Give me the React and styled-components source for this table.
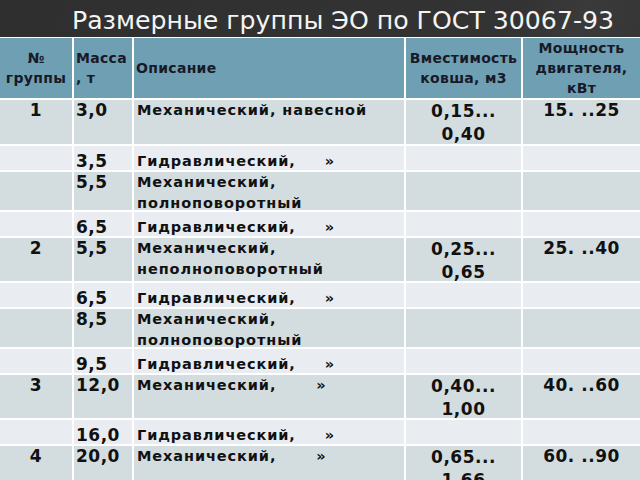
import React from "react";
import styled, { createGlobalStyle } from "styled-components";

const Global = createGlobalStyle`
  html, body { margin: 0; padding: 0; background: #333333; overflow: hidden; }
  #root { width: 640px; height: 480px; overflow: hidden; }
`;

const Slide = styled.div`
  width: 640px;
  height: 480px;
  display: flex;
  flex-direction: column;
  background: #ffffff;
  overflow: hidden;
  font-family: "DejaVu Sans", Verdana, sans-serif;
`;

const TitleBar = styled.div`
  height: 37px;
  flex: none;
  background: linear-gradient(110deg, #2f2f2f 0%, #333333 80%, #3a3a3a 90%, #363636 100%);
  display: flex;
  align-items: center;
  padding: 3px 0 0 72px;
  box-sizing: border-box;
`;

const Title = styled.h1`
  margin: 0;
  font-weight: normal;
  font-size: 25.2px;
  letter-spacing: 0;
  color: #f4f4f4;
  white-space: nowrap;
`;

const Table = styled.div`
  display: grid;
  grid-template-columns: 72px 58px 270px 115px 117px;
  column-gap: 2px;
  row-gap: 2px;
  background: #ffffff;
  padding-top: 1px;
`;

const HeadCell = styled.div`
  background: #6f9fb3;
  height: 60px;
  display: flex;
  flex-direction: column;
  justify-content: center;
  align-items: ${(p) => (p.$center ? "center" : "flex-start")};
  text-align: ${(p) => (p.$center ? "center" : "left")};
  padding-left: ${(p) => (p.$center ? 0 : 2)}px;
  font-weight: bold;
  font-size: 14px;
  line-height: 20px;
  color: #181a28;
  letter-spacing: 0.3px;
  white-space: nowrap;
`;

const Cell = styled.div`
  background: ${(p) => (p.$dark ? "#d3dde0" : "#e9edf1")};
  height: ${(p) => p.$h}px;
  box-sizing: border-box;
  padding-top: ${(p) => (p.$dark ? 0 : 5)}px;
  padding-left: ${(p) => p.$pl || 0}px;
  text-align: ${(p) => (p.$center ? "center" : "left")};
  color: #111111;
  font-weight: bold;
  white-space: nowrap;
`;

const Num = styled.div`
  font-size: 17px;
  line-height: ${(p) => (p.$tall ? 23 : 21)}px;
  letter-spacing: 0.5px;
`;

const Desc = styled.div`
  font-size: 14.5px;
  line-height: 21px;
  letter-spacing: 0.9px;
`;

const Quote = styled.span`
  display: inline-block;
  margin-left: ${(p) => p.$gap}px;
`;

const rows = [
  { dark: true, h: 44, g: "1", m: "3,0", d: ["Механический, навесной"], v: ["0,15...", "0,40"], p: "15. ..25" },
  { h: 24, m: "3,5", d: ["Гидравлический,"], q: 29 },
  { dark: true, h: 38, m: "5,5", d: ["Механический,", "полноповоротный"] },
  { h: 24, m: "6,5", d: ["Гидравлический,"], q: 29 },
  { dark: true, h: 43, g: "2", m: "5,5", d: ["Механический,", "неполноповоротный"], v: ["0,25...", "0,65"], p: "25. ..40" },
  { h: 24, m: "6,5", d: ["Гидравлический,"], q: 29 },
  { dark: true, h: 38, m: "8,5", d: ["Механический,", "полноповоротный"] },
  { h: 24, m: "9,5", d: ["Гидравлический,"], q: 29 },
  { dark: true, h: 43, g: "3", m: "12,0", d: ["Механический,"], q: 40, v: ["0,40...", "1,00"], p: "40. ..60" },
  { h: 24, m: "16,0", d: ["Гидравлический,"], q: 29 },
  { dark: true, h: 46, g: "4", m: "20,0", d: ["Механический,"], q: 40, v: ["0,65...", "1,66"], p: "60. ..90" },
];

export default function App() {
  return (
    <>
      <Global />
      <Slide>
        <TitleBar>
          <Title>Размерные группы ЭО по ГОСТ 30067-93</Title>
        </TitleBar>
        <Table>
          <HeadCell $center>
            <span>№</span>
            <span>группы</span>
          </HeadCell>
          <HeadCell>
            <span>Масса</span>
            <span>, т</span>
          </HeadCell>
          <HeadCell>
            <span>Описание</span>
          </HeadCell>
          <HeadCell $center>
            <span>Вместимость</span>
            <span>ковша, м3</span>
          </HeadCell>
          <HeadCell $center>
            <span>Мощность</span>
            <span>двигателя,</span>
            <span>кВт</span>
          </HeadCell>
          {rows.map((r, i) => (
            <React.Fragment key={i}>
              <Cell $dark={r.dark} $h={r.h} $center>
                {r.g && <Num>{r.g}</Num>}
              </Cell>
              <Cell $dark={r.dark} $h={r.h} $pl={2}>
                <Num>{r.m}</Num>
              </Cell>
              <Cell $dark={r.dark} $h={r.h} $pl={3}>
                {r.d.map((line, j) => (
                  <Desc key={j}>
                    {line}
                    {r.q && j === r.d.length - 1 && <Quote $gap={r.q}>»</Quote>}
                  </Desc>
                ))}
              </Cell>
              <Cell $dark={r.dark} $h={r.h} $center>
                {r.v && r.v.map((x, j) => <Num key={j} $tall>{x}</Num>)}
              </Cell>
              <Cell $dark={r.dark} $h={r.h} $center>
                {r.p && <Num>{r.p}</Num>}
              </Cell>
            </React.Fragment>
          ))}
        </Table>
      </Slide>
    </>
  );
}
